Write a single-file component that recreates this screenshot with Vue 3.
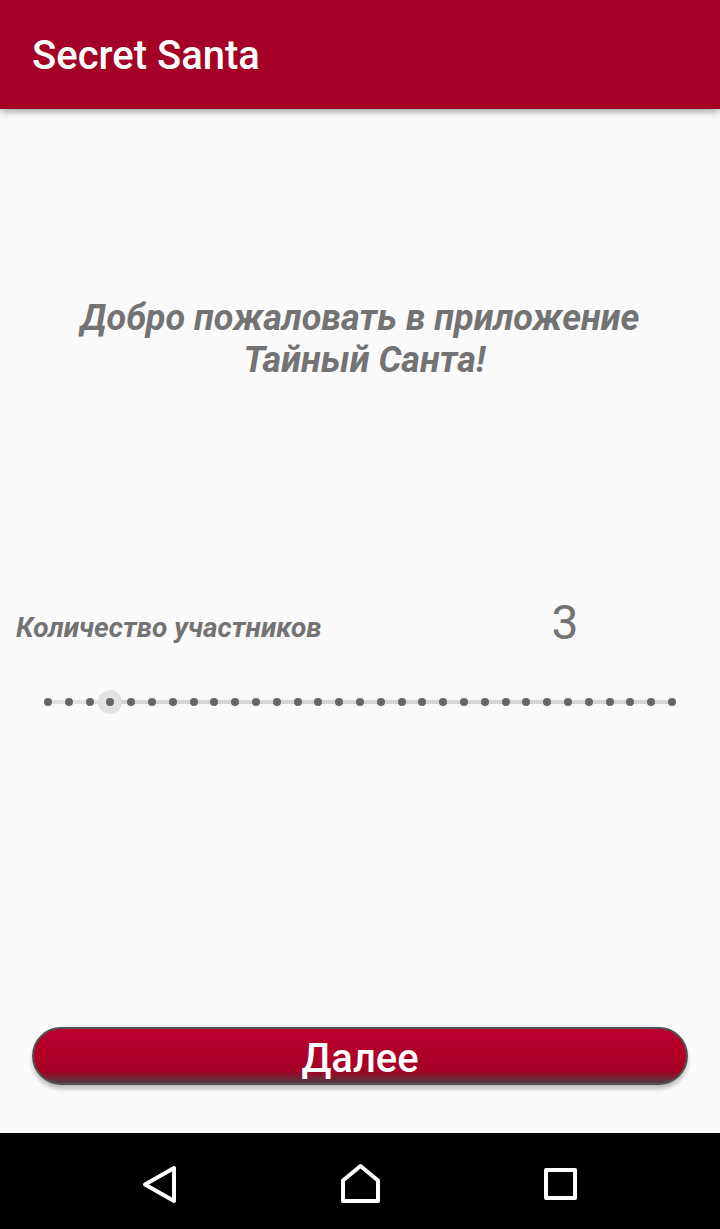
<script setup>
import { ref } from 'vue'

const max = 30
const count = ref(3)
</script>

<template>
  <div class="screen">
    <header class="bar">
      <h1 class="bar-title">Secret Santa</h1>
    </header>

    <main class="content">
      <h2 class="welcome">Добро пожаловать в приложение<br />&nbsp;Тайный Санта!</h2>

      <div class="count-row">
        <label class="count-label" for="count">Количество участников</label>
        <output class="count-value" for="count">{{ count }}</output>
      </div>

      <div class="slider">
        <input
          id="count"
          v-model.number="count"
          class="range"
          type="range"
          min="0"
          :max="max"
          step="1"
          :style="{ '--filled': (count / max) * 100 + '%' }"
        />
        <div class="ticks" aria-hidden="true">
          <span v-for="n in max + 1" :key="n" class="tick"></span>
        </div>
      </div>

      <button class="next" type="button">Далее</button>
    </main>

    <nav class="system-nav">
      <button class="nav-button" type="button" aria-label="Назад">
        <svg class="icon" viewBox="0 0 48 48"><path d="M9 27.5 38 11V44Z" /></svg>
      </button>
      <button class="nav-button" type="button" aria-label="Домой">
        <svg class="icon" viewBox="0 0 48 48"><path d="M24.5 9 42 23.5V44H7V23.5Z" /></svg>
      </button>
      <button class="nav-button" type="button" aria-label="Обзор">
        <svg class="icon" viewBox="0 0 48 48"><path d="M10 13H39V41H10Z" /></svg>
      </button>
    </nav>
  </div>
</template>

<style>
body {
  background: #fafafa;
}
</style>

<style scoped>
.screen {
  display: flex;
  flex-direction: column;
  min-height: 100vh;
  background: #fafafa;
  color: #737373;
  font-family: Roboto, "Noto Sans", sans-serif;
}

.bar {
  display: flex;
  align-items: center;
  padding: 32px 32px 30px;
  background: #a50025;
  box-shadow: 0 2px 8px rgba(0, 0, 0, 0.4);
}

.bar-title {
  margin: 0;
  color: #fff;
  font-size: 40px;
  font-weight: 500;
  line-height: 47px;
}

.content {
  display: flex;
  flex: 1;
  flex-direction: column;
  padding: 188px 0 48px;
}

.welcome {
  margin: 0 16px;
  font-size: 36px;
  font-style: italic;
  font-weight: 700;
  line-height: 42px;
  text-align: center;
}

.count-row {
  display: grid;
  grid-template-columns: 41fr 31fr;
  align-items: center;
  margin-top: 214px;
}

.count-label {
  padding: 8px 0 0 16px;
  font-size: 28px;
  font-style: italic;
  font-weight: 700;
  line-height: 33px;
}

.count-value {
  font-size: 48px;
  line-height: 56px;
  text-align: center;
}

.slider {
  display: grid;
  align-items: center;
  margin: 39px 36px 48px;
}

.range,
.ticks {
  grid-area: 1 / 1;
}

.range {
  width: 100%;
  height: 24px;
  margin: 0;
  background: transparent;
  appearance: none;
}

.range::-webkit-slider-runnable-track {
  height: 24px;
  background: linear-gradient(to right, #e2e2e2 var(--filled), #d4d4d4 var(--filled))
    center / calc(100% - 24px) 4px no-repeat;
}

.range::-webkit-slider-thumb {
  width: 24px;
  height: 24px;
  border-radius: 50%;
  background: #e2e2e2;
  appearance: none;
}

.ticks {
  z-index: 1;
  display: flex;
  justify-content: space-between;
  margin: 0 8px;
  pointer-events: none;
}

.tick {
  width: 8px;
  height: 8px;
  border-radius: 50%;
  background: #666;
}

.next {
  margin: auto 32px 0;
  padding: 6px 0 1px;
  border: 2px solid #555051;
  border-radius: 29px;
  background: linear-gradient(#bd002d 0%, #a50025 74%, #a50025 76%, #4a4142 97%) border-box;
  box-shadow: 0 4px 4px rgba(0, 0, 0, 0.24);
  color: #fff;
  font-family: inherit;
  font-size: 40px;
  font-weight: 500;
  line-height: 47px;
}

.system-nav {
  display: grid;
  grid-template-columns: repeat(3, 1fr);
  padding: 0 60px;
  background: #000;
}

.nav-button {
  display: flex;
  justify-content: center;
  padding: 24px 0;
  border: 0;
  background: none;
}

.icon {
  width: 48px;
  height: 48px;
  fill: none;
  stroke: #fff;
  stroke-linejoin: round;
  stroke-width: 4;
}
</style>
